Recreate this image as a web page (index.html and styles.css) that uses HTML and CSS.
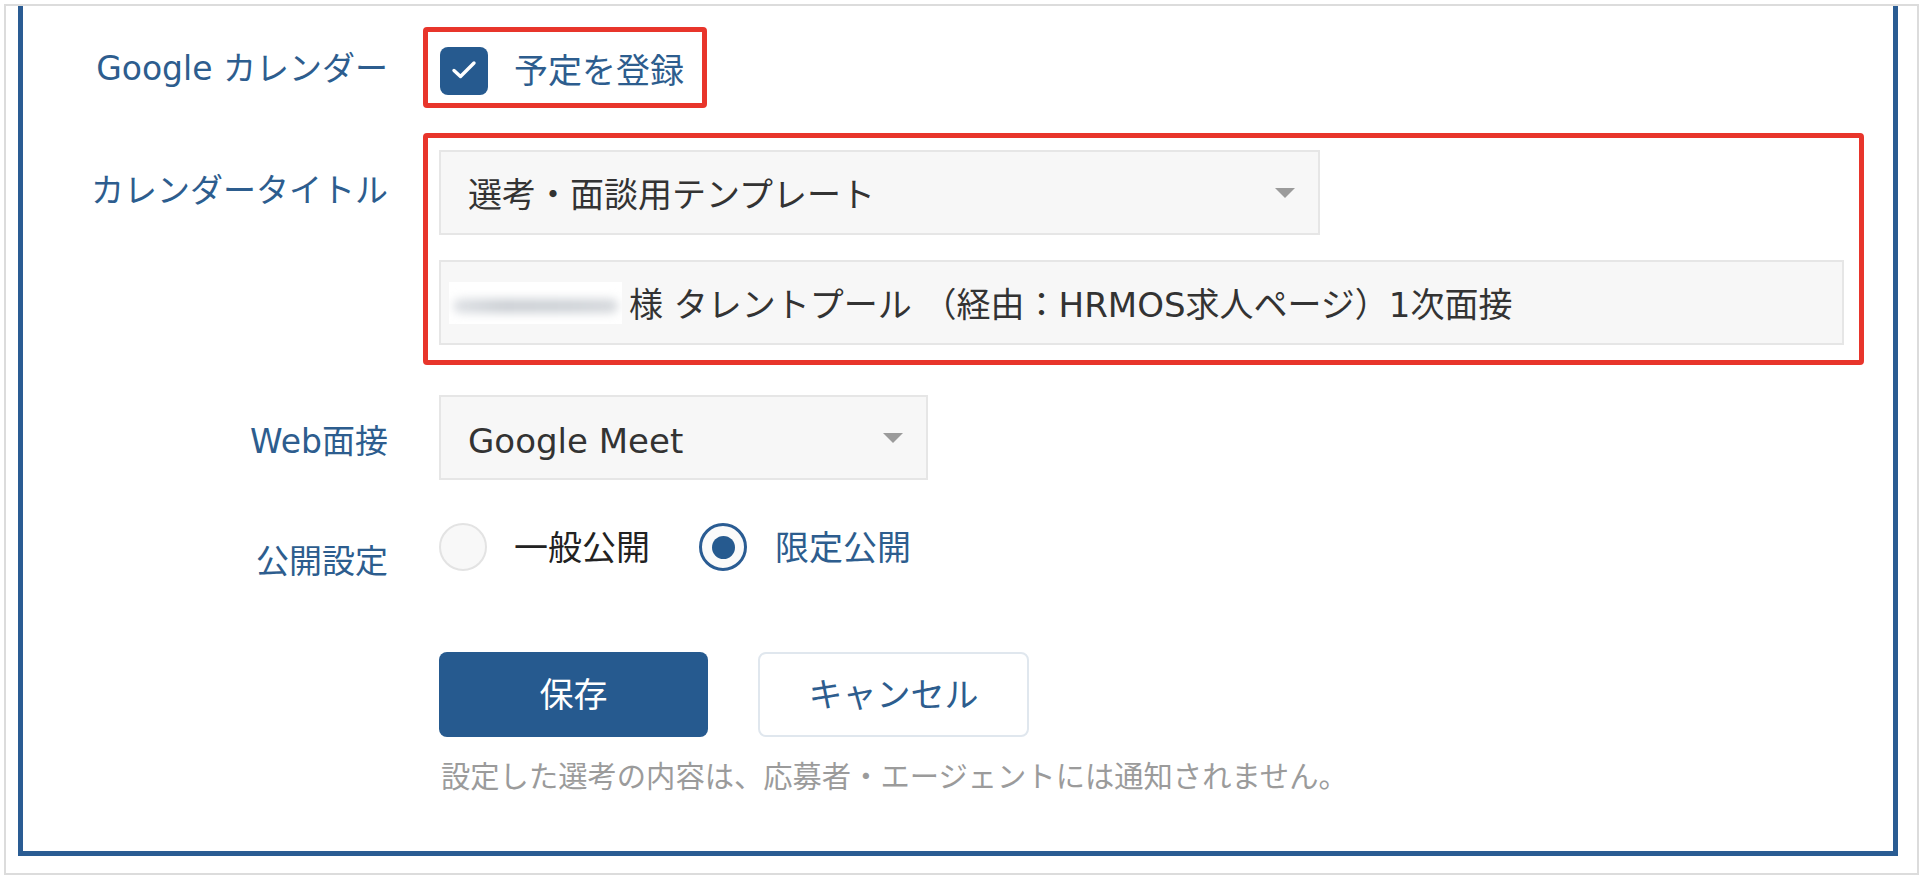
FILE: index.html
```html
<!DOCTYPE html>
<html lang="ja">
<head>
<meta charset="utf-8">
<title>選考設定</title>
<link rel="stylesheet" href="styles.css">
</head>
<body>
<div class="shot">
  <div class="panel">
    <form class="form">
      <div class="row row-gcal">
        <div class="label label-gcal">Google カレンダー</div>
        <div class="annot annot-check">
          <span class="checkbox">
            <svg width="48" height="48" viewBox="0 0 48 48"><polyline points="14,23.5 20.5,29.5 34,16" fill="none" stroke="#fff" stroke-width="3.4" stroke-linecap="round" stroke-linejoin="round"/></svg>
          </span>
          <span class="check-text">予定を登録</span>
        </div>
      </div>

      <div class="row row-title">
        <div class="label label-title">カレンダータイトル</div>
        <div class="annot annot-title">
          <div class="select select-template"><span class="select-text">選考・面談用テンプレート</span><span class="caret"></span></div>
          <div class="input"><span class="redact"></span><span class="input-text">様 タレントプール （経由：HRMOS求人ページ）1次面接</span></div>
        </div>
      </div>

      <div class="row row-web">
        <div class="label label-web">Web面接</div>
        <div class="select select-web"><span class="select-text">Google Meet</span><span class="caret"></span></div>
      </div>

      <div class="row row-public">
        <div class="label label-public">公開設定</div>
        <div class="radios">
          <span class="radio"></span><span class="radio-text">一般公開</span>
          <span class="radio radio-on"><span class="radio-dot"></span></span><span class="radio-text radio-text-on">限定公開</span>
        </div>
      </div>

      <div class="row row-actions">
        <div class="label"></div>
        <div class="actions">
          <div class="buttons">
            <button type="button" class="btn btn-primary">保存</button>
            <button type="button" class="btn btn-secondary">キャンセル</button>
          </div>
          <p class="note">設定した選考の内容は、応募者・エージェントには通知されません。</p>
        </div>
      </div>
    </form>
  </div>
</div>
</body>
</html>
```

FILE: styles.css
```css
* { box-sizing: border-box; }

html, body {
  margin: 0;
  background: #fff;
}

body {
  padding: 4px;
  font-family: "DejaVu Sans", "Noto Sans CJK JP", sans-serif;
  font-size: 34px;
  line-height: 48px;
  color: #333;
}

.shot {
  width: 1915px;
  height: 871px;
  border: 2px solid #dcdcdc;
  padding-left: 12px;
}

.panel {
  width: 1880px;
  height: 850px;
  border: 5px solid #2a5c93;
  border-top: none;
}

.form {
  margin: 0;
  padding: 21px 29px 0 0;
  display: flex;
  flex-direction: column;
}

.row {
  display: grid;
  grid-template-columns: 365px 1fr;
  column-gap: 51px;
  align-items: start;
}

.row-title { margin-top: 25px; }
.row-web { margin-top: 30px; }
.row-public { margin-top: 42px; }
.row-actions { margin-top: 66px; }

.label {
  font-size: 33px;
  text-align: right;
  color: #2d5d8e;
  white-space: nowrap;
}
.label-gcal { padding-top: 18px; }
.label-title { padding-top: 34px; }
.label-web { padding-top: 23px; }
.label-public { padding-top: 16px; }

/* red annotation frames */
.annot {
  margin-left: -16px;
  border: 5px solid #e8352b;
  border-radius: 4px;
}

.annot-check {
  justify-self: start;
  display: flex;
  align-items: center;
  padding: 15px 18px 8px 12px;
}

.checkbox {
  width: 48px;
  height: 48px;
  border-radius: 8px;
  background: #265a8f;
  display: flex;
}

.check-text {
  margin-left: 26px;
  color: #2d5d8e;
}

.annot-title {
  display: flex;
  flex-direction: column;
  gap: 25px;
  padding: 12px 15px 15px 11px;
}

.select {
  height: 85px;
  background: #f7f7f7;
  border: 2px solid #e6e6e6;
  display: flex;
  align-items: center;
  padding: 0 23px 0 27px;
  color: #333;
}
.select-template { width: 881px; }
.select-web { width: 489px; }
.select-template .select-text { padding-top: 5px; }
.select-web .select-text { padding-top: 6px; }

.caret {
  margin-left: auto;
  width: 0;
  height: 0;
  border-left: 10.5px solid transparent;
  border-right: 10.5px solid transparent;
  border-top: 10px solid #9b9b9b;
}

.input {
  height: 85px;
  background: #f7f7f7;
  border: 2px solid #e6e6e6;
  display: flex;
  align-items: center;
  padding: 0 27px;
  color: #333;
  white-space: nowrap;
}
.input-text { padding-top: 4px; }

.redact {
  flex: none;
  width: 173px;
  height: 42px;
  margin-left: -19px;
  margin-right: 7px;
  background: #fff;
  overflow: hidden;
  display: flex;
  align-items: center;
  padding: 0 4px;
}
.redact::before {
  content: "";
  display: block;
  width: 100%;
  height: 14px;
  margin-top: 6px;
  border-radius: 7px;
  background: linear-gradient(90deg, #dde0e4, #cbcfd4 30%, #ced2d7 70%, #d5d8dc);
  filter: blur(5px);
}

/* radios */
.radios {
  display: flex;
  align-items: center;
}
.radio {
  width: 48px;
  height: 48px;
  border-radius: 50%;
  border: 2px solid #e3e3e3;
  background: #f8f8f8;
  display: flex;
  align-items: center;
  justify-content: center;
  flex: none;
}
.radio-on {
  border: 3px solid #2a5c93;
  background: #fafafa;
}
.radio-dot {
  width: 23px;
  height: 23px;
  border-radius: 50%;
  background: #265a8f;
}
.radio-text {
  margin-left: 27px;
  margin-right: 49px;
  color: #222;
  padding-top: 2px;
}
.radio-text-on {
  margin-left: 28px;
  color: #2d5d8e;
}

/* actions */
.actions {
  display: flex;
  flex-direction: column;
}
.buttons {
  display: flex;
  gap: 50px;
}
.btn {
  height: 85px;
  border-radius: 8px;
  font: inherit;
  font-size: 34px;
  line-height: 48px;
  padding: 0;
  cursor: pointer;
}
.btn-primary {
  width: 269px;
  background: #265a8f;
  border: none;
  color: #fff;
}
.btn-secondary {
  width: 271px;
  background: #fff;
  border: 2px solid #e0e7ee;
  color: #2d5d8e;
}

.note {
  margin: 19px 0 0 2px;
  font-size: 29.3px;
  line-height: 42px;
  color: #9b9b9b;
  white-space: nowrap;
}
```
